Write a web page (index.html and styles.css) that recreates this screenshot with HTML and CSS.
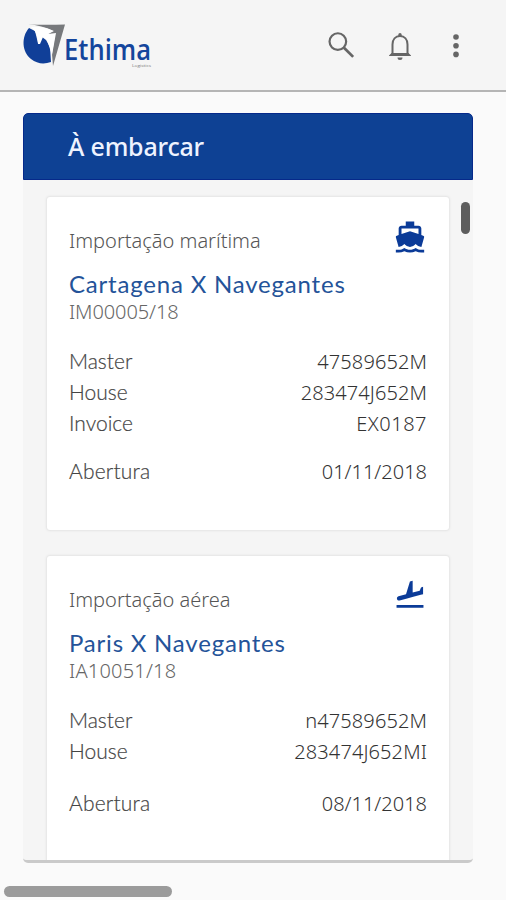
FILE: index.html
```html
<!DOCTYPE html>
<html lang="pt-BR">
<head>
<meta charset="utf-8">
<title>Ethima</title>
<link rel="stylesheet" href="styles.css">
</head>
<body>
<header class="topbar">
  <svg class="logo" viewBox="0 0 132 52" role="img" aria-label="Ethima">
    <path d="M5 1.500Q24 2 42 1.500L30 43L29 31L32 12L25 11L30 8Q19 2 5 1.500Z" fill="#77797c"/>
    <path d="M6 5C-2 14-1 29 8 36Q17 43 28 39L27 24L23 17L19 14L15 20L12 8Z" fill="#103f98"/>
    <path d="M8 4Q19 3 31 8L25 11L33 10L29 32L27 26L24 17L20 14L17 21L15 21Q15 9 8 4Z" fill="#fff"/>
    <text class="brand" x="41" y="37" textLength="87" lengthAdjust="spacingAndGlyphs">Ethima</text>
    <text class="tagline" x="109" y="43.500" textLength="19" lengthAdjust="spacingAndGlyphs">Logistics</text>
  </svg>
  <nav class="actions">
    <svg class="search" viewBox="0 0 24 24"><g fill="none" stroke="#666" stroke-width="1.500"><circle cx="9.500" cy="9.300" r="5.700"/><path d="M13.700 13.500L20 19.800" stroke-width="1.900"/></g></svg>
    <svg class="bell" viewBox="0 0 24 28"><path d="M4.500 22V12.500C4.500 7.500 7.500 4 12 4s7.500 3.500 7.500 8.500V22" fill="none" stroke="#666" stroke-width="2"/><path d="M10.300 4V2.700a1.700 1.700 0 0 1 3.400 0V4zM1 23.500L3.500 21h17l2.500 2.500V24H1zM9.500 25.500h5a2.500 2.500 0 0 1-5 0z"/></svg>
    <svg class="more" viewBox="0 0 6 24"><circle cx="3" cy="3" r="2.800"/><circle cx="3" cy="11.700" r="2.800"/><circle cx="3" cy="20.400" r="2.800"/></svg>
  </nav>
</header>
<main class="panel">
  <h1 class="panel-title"><span>À embarcar</span></h1>
  <div class="list">
    <article class="card">
      <div class="card-head"><span class="kind">Importação marítima</span>
        <svg class="mode" viewBox="0 0 24 24"><path d="M20 21c-1.390 0-2.780-.47-4-1.320-2.440 1.710-5.560 1.710-8 0C6.780 20.530 5.390 21 4 21H2v2h2c1.380 0 2.740-.35 4-.99 2.520 1.290 5.480 1.290 8 0 1.260.65 2.620.99 4 .99h2v-2h-2zM3.950 19H4c1.600 0 3.020-.88 4-2 .98 1.120 2.400 2 4 2s3.020-.88 4-2c.98 1.120 2.400 2 4 2h.05l1.890-6.680c.08-.26.06-.54-.06-.78s-.34-.42-.6-.5L20 10.620V6c0-1.100-.9-2-2-2h-3V1H9v3H6c-1.100 0-2 .9-2 2v4.620l-1.290.42c-.26.080-.48.26-.6.5s-.15.52-.06.78L3.950 19zM6 6h12v3.970L12 8 6 9.970V6z"/></svg>
      </div>
      <h2 class="route">Cartagena X Navegantes</h2>
      <p class="code">IM00005/18</p>
      <dl class="rows">
        <div><dt>Master</dt><dd>47589652M</dd></div>
        <div><dt>House</dt><dd>283474J652M</dd></div>
        <div><dt>Invoice</dt><dd class="wide">EX0187</dd></div>
        <div class="opening"><dt>Abertura</dt><dd class="date">01/11/2018</dd></div>
      </dl>
    </article>
    <article class="card">
      <div class="card-head"><span class="kind">Importação aérea</span>
        <svg class="mode plane" viewBox="0 0 24 24"><path transform="matrix(-1 0 0 1 24 0)" d="M2.500 19h19v2h-19zm7.180-5.730l4.350 1.160 5.310 1.420c.8.210 1.620-.26 1.840-1.060.21-.8-.26-1.620-1.060-1.840l-5.310-1.420-2.760-9.020L10.120 2v8.280L5.150 8.950l-.93-2.320-1.450-.39v5.170l1.600.43 5.310 1.430z"/></svg>
      </div>
      <h2 class="route">Paris X Navegantes</h2>
      <p class="code wide">IA10051/18</p>
      <dl class="rows">
        <div><dt>Master</dt><dd>n47589652M</dd></div>
        <div><dt>House</dt><dd>283474J652MI</dd></div>
        <div class="opening far"><dt>Abertura</dt><dd class="date">08/11/2018</dd></div>
      </dl>
    </article>
    <div class="thumb"></div>
  </div>
</main>
<div class="hscroll"></div>
</body>
</html>
```
FILE: styles.css
```css
* { box-sizing: border-box; }
body {
  margin: 0;
  height: 900px;
  overflow: hidden;
  background: #fafafa;
  font-family: "Lato", "Noto Sans", sans-serif;
  display: flex;
  flex-direction: column;
}
.topbar {
  height: 92px;
  flex: none;
  display: flex;
  justify-content: space-between;
  align-items: flex-start;
  padding: 23px 47px 0 23px;
  background: #f5f5f5;
  border-bottom: 2px solid #b5b5b5;
}
.logo { width: 132px; height: 52px; overflow: visible; }
.brand { font: 600 28px "Open Sans", sans-serif; fill: #14459c; }
.tagline { font: 400 4px "Open Sans", sans-serif; fill: #777; }
.actions { display: flex; align-items: flex-start; fill: #666; }
.search { width: 35px; height: 35px; margin: 5px 29px 0 0; }
.bell { width: 24px; height: 28px; margin: 9px 41px 0 0; }
.more { width: 6px; height: 24px; margin-top: 11px; }
.panel {
  width: 450px;
  height: 750px;
  flex: none;
  margin: 21px 0 0 23px;
  border-radius: 5px;
  overflow: hidden;
  background: #f5f5f5;
  border-bottom: 3px solid #cacaca;
}
.panel-title {
  margin: 0;
  height: 67px;
  padding-left: 44px;
  background: #0e4194;
  border: 1px solid #06298a;
  border-radius: 5px 5px 0 0;
  color: #eef3ff;
  font: 500 25px/64px "Noto Sans", sans-serif;
  letter-spacing: -0.2px;
}
.list { position: relative; padding: 17px 24px 0; }
.card {
  height: 333px;
  margin-bottom: 26px;
  padding: 24px 22px 0;
  background: #fff;
  border-radius: 3px;
  box-shadow: 0 0 2px 1px #e4e4e4;
}
.card-head { height: 45px; display: flex; justify-content: space-between; }
.kind { font: 300 20px/40px "Noto Sans", sans-serif; color: #555; white-space: nowrap; }
.mode { width: 34px; height: 34px; margin: -1px 0 0; fill: #0b3b98; }
.mode.plane { margin-top: -2px; }
.route { margin: 0; font-size: 24px; font-weight: 400; line-height: 36px; letter-spacing: 0.8px; color: #245399; white-space: nowrap; }
.code { margin: 0; font: 300 20px/20px "Noto Sans", sans-serif; letter-spacing: -0.1px; color: #666; }
.code.wide { letter-spacing: 0.2px; }
.rows { margin: 23px 0 0; color: #444; }
.rows div { display: flex; justify-content: space-between; height: 31px; line-height: 31px; white-space: nowrap; }
.rows .opening { margin-top: 17px; }
.rows .far { margin-top: 21px; }
.opening dt { letter-spacing: 0.2px; }
dt { font-size: 21px; font-weight: 300; -webkit-text-stroke: 0.2px #444; }
dd { margin: 0; font: 300 20px/33px "Noto Sans", sans-serif; letter-spacing: 0.1px; color: #333; }
dd.wide { letter-spacing: 0.5px; }
dd.date { letter-spacing: 0; }
.thumb { position: absolute; right: 3px; top: 22px; width: 9px; height: 32px; border-radius: 5px; background: #5d5d5d; }
.hscroll { width: 168px; height: 11px; flex: none; margin: 23px 0 0 4px; border-radius: 6px; background: #9b9b9b; }
```
